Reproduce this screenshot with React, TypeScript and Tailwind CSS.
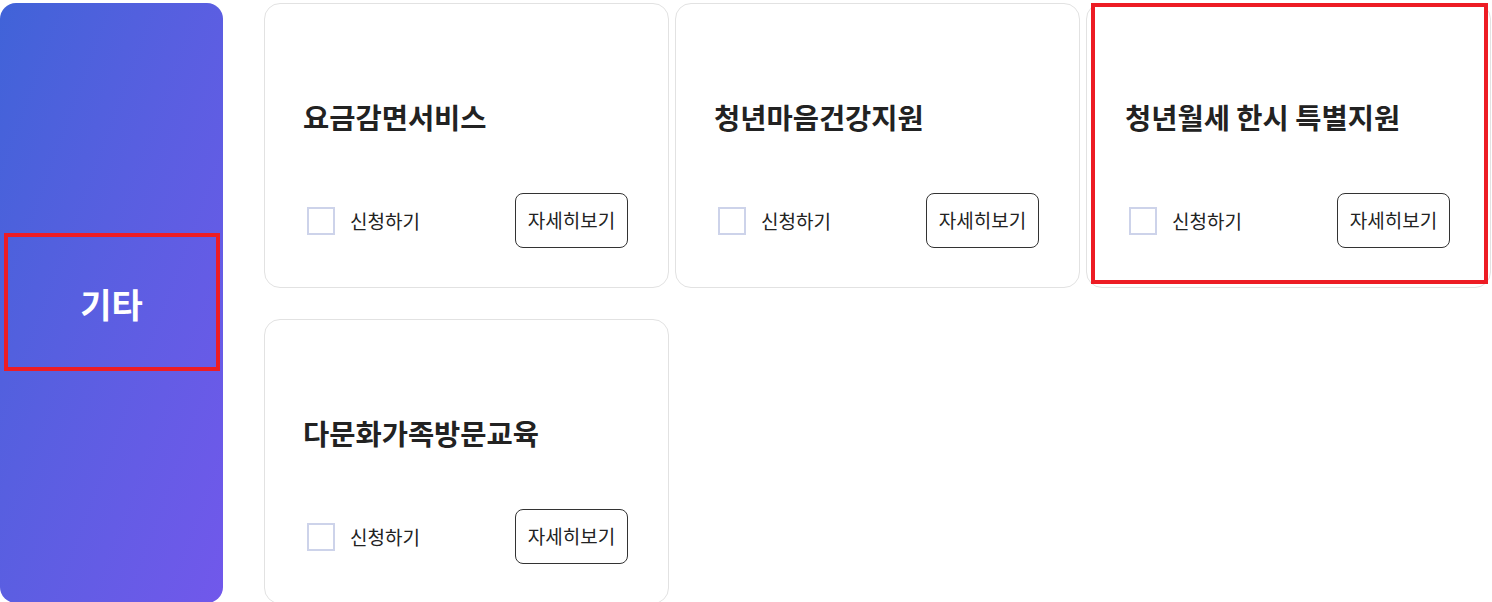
import React from "react";

const cards = [
  "요금감면서비스",
  "청년마음건강지원",
  "청년월세 한시 특별지원",
  "다문화가족방문교육",
];

function Card({ title, highlighted }: { title: string; highlighted?: boolean }) {
  return (
    <div className="relative flex h-[285px] flex-col rounded-[16px] border border-[#e2e2e2] bg-white pl-[38px] pr-[40px] pt-[95px]">
      <h3 className="h-[36px] whitespace-nowrap text-[28.5px] font-bold leading-[36px] text-[#222222]">{title}</h3>
      <div className="mt-[58px] flex items-center justify-between">
        <label className="ml-[4px] flex items-center gap-[15px]">
          <span className="block h-[28px] w-[28px] border-2 border-[#cdd3ea] bg-white" />
          <span className="text-[19px] leading-[26px] text-[#222222]">신청하기</span>
        </label>
        <button className="flex h-[55px] w-[113px] items-center justify-center rounded-[8px] border border-[#333333] bg-white text-[19px] text-[#222222]">
          자세히보기
        </button>
      </div>
      {highlighted && (
        <div className="pointer-events-none absolute left-[4px] top-[-1px] h-[281px] w-[397px] border-[4px] border-[#ed1c24]" />
      )}
    </div>
  );
}

export default function App() {
  return (
    <div
      className="relative flex h-[602px] w-[1492px] overflow-hidden bg-white pt-[3px]"
      style={{ fontFamily: '"Noto Sans CJK KR", "Noto Sans", sans-serif' }}
    >
      <aside className="relative flex h-[600px] w-[223px] shrink-0 items-center justify-center rounded-[16px] bg-linear-to-br from-[#4063d8] to-[#7158eb] pt-[2px]">
        <span className="text-[34px] font-bold leading-none text-white">기타</span>
        <div className="pointer-events-none absolute left-[4px] top-[230px] h-[138px] w-[216px] border-[4px] border-[#ed1c24]" />
      </aside>
      <main className="ml-[41px] grid grid-cols-[405px_405px_405px] content-start gap-x-[6px] gap-y-[31px]">
        {cards.map((t, i) => (
          <Card key={t} title={t} highlighted={i === 2} />
        ))}
      </main>
    </div>
  );
}
